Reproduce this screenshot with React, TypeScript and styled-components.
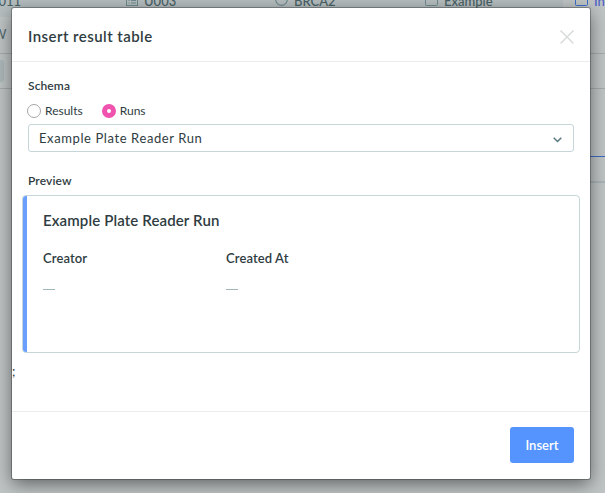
import React from 'react';
import styled, { createGlobalStyle } from 'styled-components';

const GlobalStyle = createGlobalStyle`
  * { box-sizing: border-box; }
  body { margin: 0; overflow: hidden; font-family: Lato, sans-serif; color: #2f3c41; }
`;

const Page = styled.div`
  position: relative;
  height: 493px;
  overflow: hidden;
  background: #bfc4c5;
`;

const TabStrip = styled.div`
  display: grid;
  grid-template-columns: 126px 149px 150px 138px 42px;
  height: 17px;
  background: #b6bebf;
`;

const Tab = styled.div<{ $active?: boolean }>`
  display: flex;
  align-items: center;
  gap: 6px;
  height: 28px;
  margin-top: -11px;
  padding-bottom: 5px;
  padding-left: ${p => (p.$active ? '12px' : '0')};
  white-space: nowrap;
  font-size: 13px;
  font-weight: 500;
  line-height: 22px;
  color: ${p => (p.$active ? '#4c5fc8' : '#496266')};
  background: ${p => (p.$active ? '#bfc4c5' : 'transparent')};
  svg { flex: none; margin-top: -3px; color: ${p => (p.$active ? '#3b6dcc' : '#6e8b90')}; }
`;

const CutTabLabel = styled.span`
  margin-left: -9px;
`;

const Toolbar = styled.div<{ $height: number }>`
  display: flex;
  align-items: center;
  height: ${p => p.$height}px;
  border-bottom: 1px solid #a5abad;
  font-size: 13px;
  color: #526970;
`;

const CutMenuLabel = styled.span`
  margin-left: -7px;
  padding-bottom: 2px;
`;

const ToolChip = styled.div`
  width: 4px;
  height: 22px;
  background: #adb8bb;
  border-radius: 0 3px 3px 0;
`;

const Workspace = styled.div`
  height: 68px;
  border-bottom: 1px solid;
  border-image: linear-gradient(to right, transparent 50%, #3c6ac0 50%) 1;
`;

const WorkspaceHeader = styled.div`
  height: 26px;
  border-bottom: 2px solid;
  border-image: linear-gradient(to right, transparent 50%, #aab4b6 50%) 1;
`;

const Dialog = styled.section`
  position: absolute;
  left: 12px;
  top: 8px;
  width: 578px;
  height: 471px;
  display: flex;
  flex-direction: column;
  background: #fff;
  border-radius: 2px;
  box-shadow: 0 0 0 1px rgba(45, 50, 52, 0.4), 0 5px 18px rgba(0, 0, 0, 0.5);
`;

const Header = styled.header`
  display: flex;
  justify-content: space-between;
  align-items: center;
  height: 54px;
  padding: 4px 16px 0;
  border-bottom: 1px solid #e9eded;
`;

const Title = styled.h1`
  margin: 0;
  padding-bottom: 1px;
  font-size: 15px;
  line-height: 20px;
  font-weight: 600;
  letter-spacing: 0.45px;
`;

const CloseButton = styled.button`
  display: flex;
  padding: 0;
  border: 0;
  background: none;
  color: #d8dcdc;
`;

const Body = styled.main`
  display: flex;
  flex-direction: column;
  flex: 1;
  padding: 16px 10px 0;
`;

const Label = styled.div`
  padding: 0 6px;
  font-size: 12px;
  line-height: 16px;
  font-weight: 600;
  letter-spacing: 0.12px;
`;

const RadioGroup = styled.div`
  display: flex;
  gap: 19px;
  height: 16px;
  margin: 9px 0 5px 5px;
`;

const RadioOption = styled.label`
  display: flex;
  align-items: center;
  gap: 4px;
  font-size: 12px;
  line-height: 16px;
`;

const RadioMark = styled.span<{ $checked?: boolean }>`
  width: 14px;
  height: 14px;
  border-radius: 50%;
  border: ${p => (p.$checked ? '5px solid #ef53ae' : '1px solid #a6a6a6')};
  background: #fff;
`;

const Select = styled.div`
  display: flex;
  justify-content: space-between;
  align-items: center;
  height: 28px;
  margin: 0 6px 21px;
  padding: 0 11px 1px 10px;
  border: 1px solid #c5d5d9;
  border-radius: 3px;
  font-size: 13px;
  letter-spacing: 0.6px;
  color: #2f3c41;
  svg { margin-top: 4px; }
`;

const PreviewCard = styled.div`
  display: flex;
  height: 158px;
  margin-top: 6px;
  overflow: hidden;
  border: 1px solid #c5d5d9;
  border-radius: 4px;
`;

const Accent = styled.div`
  width: 4px;
  background: #6b9fff;
`;

const PreviewContent = styled.div`
  flex: 1;
  padding: 14px 16px;
`;

const PreviewTitle = styled.h2`
  margin: 0;
  font-size: 15px;
  line-height: 20px;
  font-weight: 600;
  letter-spacing: 0.13px;
`;

const Fields = styled.div`
  display: grid;
  grid-template-columns: 183px 1fr;
  margin-top: 20px;
`;

const FieldName = styled.div`
  font-size: 13px;
  line-height: 16px;
  font-weight: 600;
  letter-spacing: 0.1px;
`;

const EmptyValue = styled.div`
  width: 12px;
  height: 1px;
  margin-top: 23px;
  background: #9fb7bb;
`;

const StrayText = styled.div`
  margin: 10px 0 0 -10px;
  font-size: 13px;
  line-height: 16px;
`;

const Footer = styled.footer`
  display: flex;
  justify-content: flex-end;
  height: 68px;
  padding: 15px 16px;
  border-top: 1px solid #e9eded;
`;

const InsertButton = styled.button`
  width: 64px;
  height: 36px;
  padding: 0;
  border: 0;
  border-radius: 3px;
  background: #5594ff;
  color: #fff;
  font: 600 13px Lato, sans-serif;
`;

const SquareIcon = () => (
  <svg width="13" height="14" viewBox="0 0 13 14" fill="none" stroke="currentColor"><rect x=".5" y=".5" width="12" height="13" rx="1" /></svg>
);

const ListIcon = () => (
  <svg width="12" height="14" viewBox="0 0 12 14" fill="none" stroke="currentColor"><rect x=".5" y=".5" width="11" height="13" /><path d="M2.5 5.5h1M2.5 8.5h1M2.5 11h1M5 5.5h5M5 8.5h5M5 11h5" /></svg>
);

const CircleIcon = () => (
  <svg width="13" height="13" viewBox="0 0 13 13" fill="none" stroke="currentColor" strokeWidth="1.2"><circle cx="6.5" cy="6.5" r="5.8" /></svg>
);

export default function App() {
  return (
    <>
      <GlobalStyle />
      <Page>
        <TabStrip>
          <Tab><CutTabLabel>0011</CutTabLabel></Tab>
          <Tab><ListIcon />U003</Tab>
          <Tab><CircleIcon />BRCA2</Tab>
          <Tab><SquareIcon />Example</Tab>
          <Tab $active><SquareIcon />Insert</Tab>
        </TabStrip>
        <Toolbar $height={37}><CutMenuLabel>W</CutMenuLabel></Toolbar>
        <Toolbar $height={35}><ToolChip /></Toolbar>
        <Workspace />
        <WorkspaceHeader />
        <Dialog role="dialog">
          <Header>
            <Title>Insert result table</Title>
            <CloseButton aria-label="Close">
              <svg width="14" height="14" viewBox="0 0 14 14" fill="none" stroke="currentColor" strokeWidth="1.5"><path d="m.5.5 13 13m0-13-13 13" /></svg>
            </CloseButton>
          </Header>
          <Body>
            <Label>Schema</Label>
            <RadioGroup>
              <RadioOption><RadioMark />Results</RadioOption>
              <RadioOption><RadioMark $checked />Runs</RadioOption>
            </RadioGroup>
            <Select>
              Example Plate Reader Run
              <svg width="9" height="6" viewBox="0 0 9 6" fill="none" stroke="#597981" strokeWidth="1.5"><path d="m.7.7 3.8 3.8L8.3.7" /></svg>
            </Select>
            <Label>Preview</Label>
            <PreviewCard>
              <Accent />
              <PreviewContent>
                <PreviewTitle>Example Plate Reader Run</PreviewTitle>
                <Fields>
                  <div><FieldName>Creator</FieldName><EmptyValue /></div>
                  <div><FieldName>Created At</FieldName><EmptyValue /></div>
                </Fields>
              </PreviewContent>
            </PreviewCard>
            <StrayText>;</StrayText>
          </Body>
          <Footer><InsertButton>Insert</InsertButton></Footer>
        </Dialog>
      </Page>
    </>
  );
}
